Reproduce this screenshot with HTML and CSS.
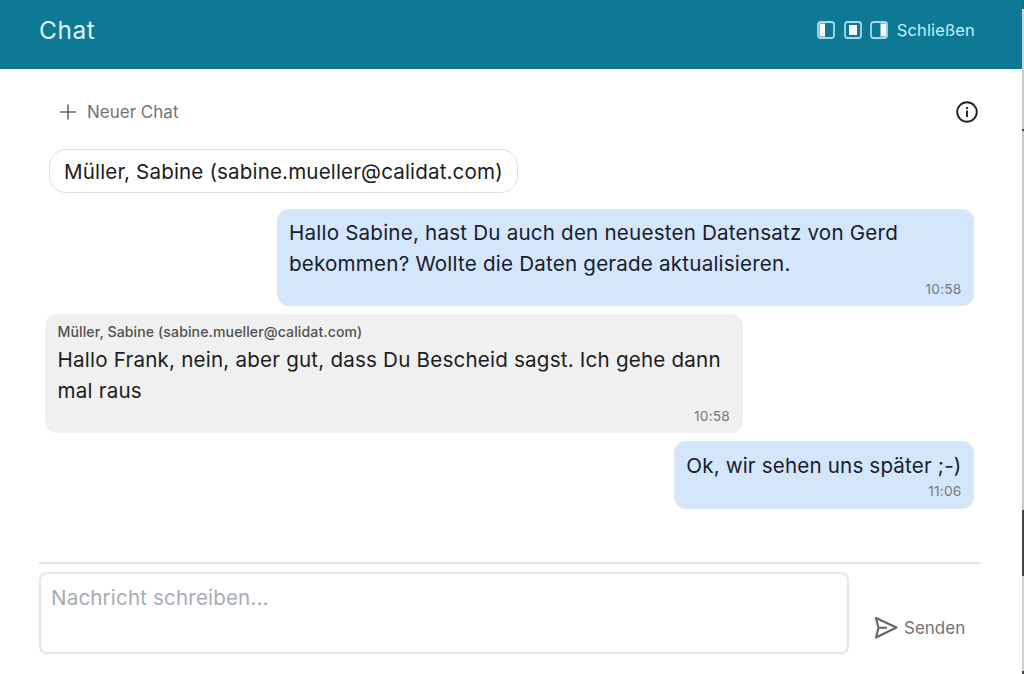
FILE: index.html
```html
<!DOCTYPE html>
<html lang="de">
<head>
    <meta charset="UTF-8">
    <meta name="viewport" content="width=device-width, initial-scale=1.0">
    <title>Chat</title>
    <link rel="stylesheet" href="styles.css">
</head>
<body>
    <div class="chat-window">
        <header class="chat-header">
            <h1 class="chat-title">Chat</h1>
            <div class="header-actions">
                <svg class="dock-icon" viewBox="0 0 18 18">
                    <rect x="1" y="1" width="16" height="16" rx="2.5"/>
                    <path class="fill" d="M2.5 2.5h5.5v13h-5.5z"/>
                </svg>
                <svg class="dock-icon" viewBox="0 0 18 18">
                    <rect x="1" y="1" width="16" height="16" rx="2.5"/>
                    <path class="fill" d="M5 4h8v10h-8z"/>
                </svg>
                <svg class="dock-icon" viewBox="0 0 18 18">
                    <rect x="1" y="1" width="16" height="16" rx="2.5"/>
                    <path class="fill" d="M10.5 2.5h5.5v13h-5.5z"/>
                </svg>
                <button class="close-btn">Schließen</button>
            </div>
        </header>

        <main class="chat-main">
            <div class="toolbar">
                <button class="new-chat-btn">
                    <svg class="plus-icon" viewBox="0 0 16 16"><path d="M8 0.5v15M0 8h16"/></svg>
                    <span>Neuer Chat</span>
                </button>
                <svg class="info-icon" viewBox="0 0 22 22">
                    <circle cx="11" cy="11" r="9.8"/>
                    <path d="M11 9.5v6.5M11 6v2"/>
                </svg>
            </div>

            <div class="contact">Müller, Sabine (sabine.mueller@calidat.com)</div>

            <div class="messages">
                <div class="message own">
                    <p class="text">Hallo Sabine, hast Du auch den neuesten Datensatz von Gerd bekommen? Wollte die Daten gerade aktualisieren.</p>
                    <span class="time">10:58</span>
                </div>
                <div class="message other">
                    <span class="sender">Müller, Sabine (sabine.mueller@calidat.com)</span>
                    <p class="text">Hallo Frank, nein, aber gut, dass Du Bescheid sagst. Ich gehe dann mal raus</p>
                    <span class="time">10:58</span>
                </div>
                <div class="message own">
                    <p class="text">Ok, wir sehen uns später ;-)</p>
                    <span class="time">11:06</span>
                </div>
            </div>

            <form class="compose">
                <textarea class="compose-input" placeholder="Nachricht schreiben..."></textarea>
                <button type="button" class="send-btn">
                    <svg class="send-icon" viewBox="0 0 24 24"><path d="M2 2L22.500 11.500L2 21.500L4.500 11.700zM4.500 11.700h8.500"/></svg>
                    <span>Senden</span>
                </button>
            </form>
        </main>
    </div>
    <div class="page-edge"></div>
</body>
</html>
```
FILE: styles.css
```css
* {
    margin: 0;
    padding: 0;
    box-sizing: border-box;
}

body {
    display: flex;
    height: 100vh;
    overflow: hidden;
    font-family: 'Inter', sans-serif;
    color: #1c1d20;
    background: #fff;
}

button {
    border: none;
    background: none;
    font-family: inherit;
    cursor: pointer;
}

.chat-window {
    flex: 1;
    display: flex;
    flex-direction: column;
}

.chat-header {
    height: 69px;
    padding: 0 47px 10px 39px;
    display: flex;
    align-items: center;
    justify-content: space-between;
    background: #0d7994;
    color: #d9f6fb;
}

.chat-title {
    font-size: 24.5px;
    font-weight: 400;
    letter-spacing: 0.5px;
}

.header-actions {
    display: flex;
    align-items: center;
    gap: 8.5px;
}

.dock-icon {
    width: 18px;
    height: 18px;
    fill: none;
    stroke: #a5dbe8;
    stroke-width: 1.8;
}

.dock-icon .fill {
    fill: #fff;
    stroke: none;
}

.close-btn {
    font-size: 16.5px;
    letter-spacing: 0.15px;
    color: #c5eff7;
}

.chat-main {
    flex: 1;
    display: flex;
    flex-direction: column;
    padding: 0 42px 20px 39px;
}

.toolbar {
    display: flex;
    align-items: center;
    justify-content: space-between;
    height: 80px;
    padding: 6px 2px 0 21px;
}

.new-chat-btn {
    display: flex;
    align-items: center;
    gap: 11px;
    font-size: 17px;
    color: #737373;
}

.plus-icon {
    width: 16px;
    height: 16px;
    stroke: #666;
    stroke-width: 1.6;
}

.info-icon {
    width: 22px;
    height: 22px;
    fill: none;
    stroke: #222;
    stroke-width: 1.9;
}

.contact {
    align-self: flex-start;
    height: 44px;
    margin: 0 0 1px 10px;
    padding: 0 14px;
    line-height: 44px;
    border: 1px solid #dedee0;
    border-radius: 17px;
    font-size: 20.6px;
    letter-spacing: 0.14px;
}

.messages {
    flex: 1;
    display: flex;
    flex-direction: column;
    gap: 8px;
    padding: 15px 6px 0;
}

.message {
    display: flex;
    flex-direction: column;
    max-width: 697.5px;
    padding: 8px 12.5px 7px;
    border-radius: 12px;
}

.message.own {
    align-self: flex-end;
    background: #d5e6fa;
    color: #17202f;
}

.message.own:last-child {
    padding-top: 9px;
    padding-bottom: 7.5px;
}

.message.other {
    align-self: flex-start;
    background: #f0f0f0;
}

.text {
    font-size: 20.6px;
    line-height: 31px;
    letter-spacing: 0.2px;
}

.message:last-child .text {
    letter-spacing: 0.16px;
}

.sender {
    font-size: 14.1px;
    font-weight: 500;
    line-height: 20px;
    margin-bottom: 2px;
    letter-spacing: 0.1px;
    color: #505050;
}

.time {
    align-self: flex-end;
    font-size: 13.7px;
    line-height: 20px;
    letter-spacing: 0.2px;
    color: #737b85;
}

.message.other .time {
    color: #777;
}

.compose {
    display: flex;
    padding-top: 8px;
    border-top: 2px solid #e2e2e2;
}

.compose-input {
    width: 810px;
    height: 82px;
    padding: 8px 10px;
    border: 2px solid #e6e6e8;
    border-radius: 8px;
    font-family: inherit;
    font-size: 20.6px;
    line-height: 31px;
    letter-spacing: 0.15px;
    resize: none;
    outline: none;
}

.compose-input::placeholder {
    color: #a9acb4;
}

.send-btn {
    display: flex;
    align-items: center;
    gap: 6px;
    padding: 29px 0 0 25px;
    font-size: 17px;
    color: #737373;
}

.send-icon {
    width: 24px;
    height: 24px;
    fill: none;
    stroke: #666;
    stroke-width: 2.1;
    stroke-linejoin: round;
}

/* slice of the page behind the chat window */
.page-edge {
    width: 2px;
    background: linear-gradient(#0d6f88 9px, #c4dade 9px 69px, #cacaca 69px 129px, #444 129px 131px, #cacaca 131px 510px, #444 510px 576px, #d0d0d0 576px 671px, #444 671px);
}
```
